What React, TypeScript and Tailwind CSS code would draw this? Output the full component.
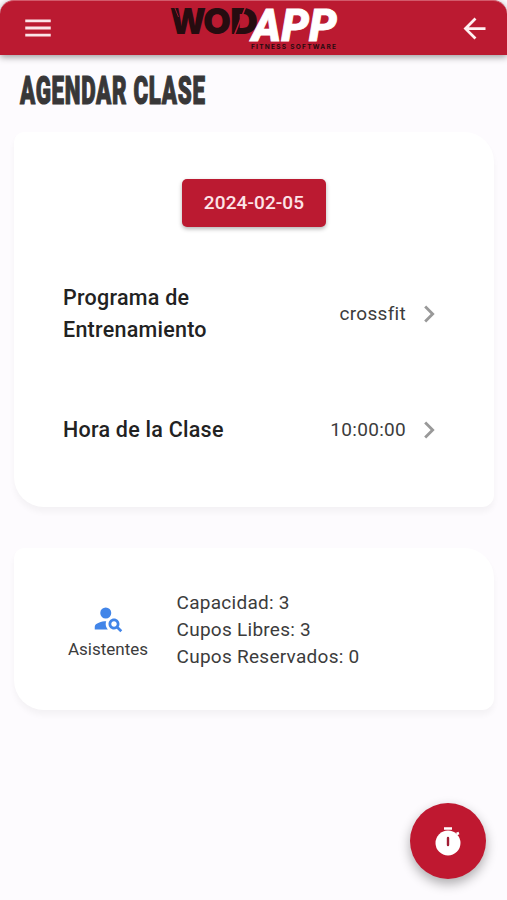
import React from 'react'
import { MdArrowBack, MdMenu, MdOutlineChevronRight, MdPersonSearch } from 'react-icons/md'

interface OptionRowProps {
  label: string
  value: string
  className?: string
}

const Logo: React.FC = () => (
  <svg width="176" height="54" viewBox="0 0 176 54" className="overflow-visible" role="img" aria-label="WodApp">
    {/* WOD */}
    <text y="33" className="fill-[#260c10] font-['Inter','Roboto',sans-serif] text-[36px] font-black">
      <tspan x="1" textLength="36" lengthAdjust="spacingAndGlyphs">W</tspan>
      <tspan x="34" textLength="28" lengthAdjust="spacingAndGlyphs">O</tspan>
      <tspan x="61" textLength="28" lengthAdjust="spacingAndGlyphs">D</tspan>
    </text>
    <g stroke="#bb1a31" fill="none">
      <path d="M5.5 6l4 10" strokeWidth="0.8" />
      <path d="M77 5L65 35" strokeWidth="1.6" />
    </g>
    {/* APP */}
    <text
      x="83"
      y="39.5"
      textLength="85"
      lengthAdjust="spacingAndGlyphs"
      stroke="#fff"
      strokeWidth="0.8"
      className="fill-white font-['Roboto',sans-serif] text-[45px] font-black italic"
    >
      APP
    </text>
    <text
      x="82"
      y="47.5"
      textLength="85"
      lengthAdjust="spacing"
      className="fill-[#260c10] font-['Inter','Roboto',sans-serif] text-[6.5px] font-bold"
    >
      FITNESS SOFTWARE
    </text>
  </svg>
)

const StopwatchIcon: React.FC<{ className?: string }> = ({ className }) => (
  <svg viewBox="0 0 28 32" fill="none" className={className}>
    <circle cx="14" cy="18" r="12.5" fill="#fff" />
    <path d="M10 3.5h8M22.5 9l2.5-1" stroke="#fff" strokeWidth="2.6" />
    <path d="M14 13v7" stroke="#a11d35" strokeWidth="2.4" strokeLinecap="round" />
  </svg>
)

const OptionRow: React.FC<OptionRowProps> = ({ label, value, className }) => (
  <button className={`flex w-full items-center justify-between text-left ${className}`}>
    <span className="w-[180px] text-[21.5px] leading-8 font-medium tracking-[0.25px] text-[#222]">{label}</span>
    <span className="flex items-center">
      <span className="text-[19px] tracking-[0.3px] text-[#3c3c3c]">{value}</span>
      <MdOutlineChevronRight className="-mr-px ml-1.5 h-[34px] w-[34px] text-[#999]" />
    </span>
  </button>
)

const App: React.FC = () => {
  return (
    <div className="relative h-[900px] w-[507px] overflow-hidden bg-[#fdfbfe] font-['Roboto',sans-serif]">
      {/* Header */}
      <header className="flex h-[55px] items-center justify-between rounded-t-[14px] border-t border-[#d25a6b] bg-[#bb1a31] pr-[16px] pl-[21px] shadow-[0_2px_7px_rgba(0,0,0,0.4)]">
        <button aria-label="Menu">
          <MdMenu className="h-[34px] w-[34px] text-[#fbe4e8]" />
        </button>
        <Logo />
        <button aria-label="Volver">
          <MdArrowBack className="h-[33px] w-[33px] text-[#fff0f1]" />
        </button>
      </header>

      <main className="px-[14px]">
        <h1 className="mt-[16px] ml-[6px] h-[40px] w-max origin-left scale-x-[0.58] text-[38.5px] leading-10 font-black tracking-[1.2px] whitespace-nowrap text-[#383738] [-webkit-text-stroke:1.2px_#383738]">
          AGENDAR CLASE
        </h1>

        {/* Class options */}
        <section className="mt-[21px] flex h-[375px] w-[480px] flex-col items-center rounded-tl-[10px] rounded-tr-[30px] rounded-br-[12px] rounded-bl-[30px] bg-white px-[49px] pt-[47px] shadow-[0_5px_6px_rgba(0,0,0,0.04)]">
          <button className="h-12 w-36 rounded-[5px] bg-[#bb1a31] text-[19px] font-medium tracking-[0.1px] text-[#fde3e7] shadow-[0_2px_4px_rgba(0,0,0,0.3)]">
            2024-02-05
          </button>
          <OptionRow label="Programa de Entrenamiento" value="crossfit" className="mt-[55px] h-16" />
          <OptionRow label="Hora de la Clase" value="10:00:00" className="mt-[68px] h-8" />
        </section>

        {/* Capacity */}
        <section className="mt-[41px] flex h-[162px] w-[480px] items-center rounded-tl-[10px] rounded-tr-[30px] rounded-br-[12px] rounded-bl-[30px] bg-white pl-[54px] shadow-[0_5px_6px_rgba(0,0,0,0.04)]">
          <button className="flex w-20 flex-col items-center pt-1">
            <MdPersonSearch className="h-[33px] w-[33px] text-[#4285e8]" />
            <span className="mt-[2px] text-[17px] leading-6 text-[#3c3c3c]">Asistentes</span>
          </button>
          <div className="ml-[28.5px] text-[19px] leading-[27px] tracking-[0.27px] text-[#3c3c3c]">
            <p>Capacidad: 3</p>
            <p>Cupos Libres: 3</p>
            <p>Cupos Reservados: 0</p>
          </div>
        </section>
      </main>

      {/* Timer */}
      <button
        aria-label="Cronómetro"
        className="absolute top-[803px] left-[410px] flex h-[76px] w-[76px] items-center justify-center rounded-full bg-[#bf1830] shadow-[0_5px_12px_rgba(0,0,0,0.32)]"
      >
        <StopwatchIcon className="h-8 w-7" />
      </button>
    </div>
  )
}

export default App
